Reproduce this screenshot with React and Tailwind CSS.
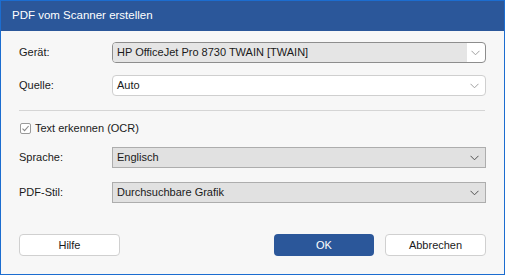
import React from "react";

const Chevron = ({ dark }) => (
  <svg width="9" height="6" viewBox="0 0 9 6" className="shrink-0">
    <path d="M0.5 0.8 L4.5 4.8 L8.5 0.8" fill="none" stroke={dark ? "#505050" : "#a0a0a0"} strokeWidth="1" />
  </svg>
);

export default function App() {
  return (
    <div
      className="w-[505px] h-[275px] bg-[#f7f7f7] border border-[#1c6dd0] flex flex-col text-[11px] text-[#1a1a1a] overflow-hidden"
      style={{ fontFamily: '"Liberation Sans", Arial, sans-serif' }}
    >
      <div className="h-[30px] bg-[#2b579a] text-white flex items-center pl-[11px] text-[11.5px] shrink-0">
        PDF vom Scanner erstellen
      </div>
      <div className="flex flex-col px-[18px] pt-[11px]">
        <div className="flex items-center h-[21px]">
          <div className="w-[93px]">Gerät:</div>
          <div className="flex-1 h-[21px] border border-[#8d8d8d] rounded-[4px] bg-white flex overflow-hidden">
            <div className="flex-1 bg-[#e5e5e5] flex items-center pl-[4px]">HP OfficeJet Pro 8730 TWAIN [TWAIN]</div>
            <div className="w-[18px] flex items-center justify-center pr-[1px]"><Chevron /></div>
          </div>
        </div>
        <div className="flex items-center h-[21px] mt-[12px]">
          <div className="w-[93px]">Quelle:</div>
          <div className="flex-1 h-[21px] border border-[#cfcfcf] rounded-[4px] bg-white flex items-center pl-[4px] pr-[6px]">
            <div className="flex-1">Auto</div>
            <Chevron />
          </div>
        </div>
        <div className="h-px bg-[#d5d5d5] mt-[14px] mr-px"></div>
        <div className="flex items-center mt-[9px] h-[16px]">
          <div className="w-[11px] h-[11px] border border-[#9a9a9a] rounded-[2px] bg-white flex items-center justify-center ml-[1px] mr-[4px]">
            <svg width="9" height="9" viewBox="0 0 9 9">
              <path d="M1.5 4.6 L3.6 6.7 L7.6 2" fill="none" stroke="#8a8a8a" strokeWidth="1.1" />
            </svg>
          </div>
          <span>Text erkennen (OCR)</span>
        </div>
        <div className="flex items-center h-[21px] mt-[11px]">
          <div className="w-[93px]">Sprache:</div>
          <div className="flex-1 h-[21px] border border-[#adadad] bg-[#e1e1e1] flex items-center pl-[4px] pr-[6px]">
            <div className="flex-1">Englisch</div>
            <Chevron dark />
          </div>
        </div>
        <div className="flex items-center h-[21px] mt-[14px]">
          <div className="w-[93px]">PDF-Stil:</div>
          <div className="flex-1 h-[21px] border border-[#adadad] bg-[#e1e1e1] flex items-center pl-[4px] pr-[6px]">
            <div className="flex-1">Durchsuchbare Grafik</div>
            <Chevron dark />
          </div>
        </div>
        <div className="flex items-center mt-[31px]">
          <div className="w-[101px] h-[22px] border border-[#d0d0d0] rounded-[4px] bg-white flex items-center justify-center">Hilfe</div>
          <div className="flex-1"></div>
          <div className="w-[100px] h-[22px] rounded-[4px] bg-[#2b579a] text-white flex items-center justify-center">OK</div>
          <div className="w-[101px] h-[22px] border border-[#d0d0d0] rounded-[4px] bg-white flex items-center justify-center ml-[11px]">Abbrechen</div>
        </div>
      </div>
    </div>
  );
}
